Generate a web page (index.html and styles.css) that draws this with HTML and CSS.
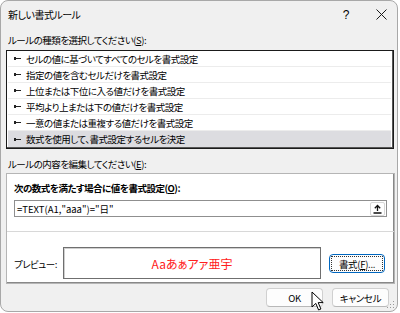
FILE: index.html
```html
<!DOCTYPE html>
<html lang="ja">
<head>
  <meta charset="UTF-8">
  <title>新しい書式ルール</title>
  <link rel="stylesheet" href="styles.css">
</head>
<body>

  <div class="dialog">

    <div class="titlebar">
      <span class="title">新しい書式ルール</span>
      <span class="title-btn help">?</span>
      <span class="title-btn close">
        <svg width="11" height="11" viewBox="0 0 11 11"><path d="M0.5 0.5 L10.5 10.5 M10.5 0.5 L0.5 10.5" stroke="#1a1a1a" stroke-width="1" fill="none"/></svg>
      </span>
    </div>

    <div class="content">
      <div class="label">ルールの種類を選択してください(<u>S</u>):</div>

      <div class="rule-list">
        <div class="rule"><span class="arrow"></span>セルの値に基づいてすべてのセルを書式設定</div>
        <div class="rule"><span class="arrow"></span>指定の値を含むセルだけを書式設定</div>
        <div class="rule"><span class="arrow"></span>上位または下位に入る値だけを書式設定</div>
        <div class="rule"><span class="arrow"></span>平均より上または下の値だけを書式設定</div>
        <div class="rule"><span class="arrow"></span>一意の値または重複する値だけを書式設定</div>
        <div class="rule selected"><span class="arrow"></span>数式を使用して、書式設定するセルを決定</div>
      </div>

      <div class="label second">ルールの内容を編集してください(<u>E</u>):</div>

      <div class="group">
        <div class="formula-part">
          <div class="formula-label">次の数式を満たす場合に値を書式設定(<u>O</u>):</div>
          <div class="formula-input">
            <span class="formula-text">=TEXT(A1,"aaa")="日"</span>
            <span class="ref-btn">
              <svg width="9" height="10" viewBox="0 0 9 10"><path d="M4.5 1.5 L4.5 7 M1.8 4.2 L4.5 1.5 L7.2 4.2 M0.5 9 L8.5 9" stroke="#111" stroke-width="1.3" fill="none"/></svg>
            </span>
          </div>
        </div>

        <div class="preview-part">
          <span class="preview-label">プレビュー:</span>
          <div class="preview-box">Aaあぁアァ亜宇</div>
          <button class="btn format-btn"><span class="focus">書式(<u>F</u>)...</span></button>
        </div>
      </div>

      <div class="footer">
        <button class="btn">OK</button>
        <button class="btn">キャンセル</button>
      </div>
    </div>

    <svg class="cursor" width="14" height="21" viewBox="0 0 14 21">
      <path d="M1 1 L1 16 L4.8 12.4 L7.6 19 L9.9 18 L7.2 11.6 L12.2 11.6 Z" fill="#fff" stroke="#000" stroke-width="1" stroke-linejoin="round"/>
    </svg>

    <svg class="grip" width="8" height="8" viewBox="0 0 8 8">
      <rect x="6" y="0" width="1" height="1" fill="#999"/>
      <rect x="3" y="3" width="1" height="1" fill="#999"/>
      <rect x="6" y="3" width="1" height="1" fill="#999"/>
      <rect x="0" y="6" width="1" height="1" fill="#999"/>
      <rect x="3" y="6" width="1" height="1" fill="#999"/>
      <rect x="6" y="6" width="1" height="1" fill="#999"/>
    </svg>

  </div>

</body>
</html>
```

FILE: styles.css
```css
* {
  margin: 0;
  padding: 0;
  box-sizing: border-box;
}

body {
  background: #fff;
  width: 400px;
  height: 313px;
  overflow: hidden;
  font-family: "Noto Sans CJK JP", sans-serif;
  font-size: 9.5px;
  letter-spacing: -0.5px;
  font-feature-settings: "palt";
  color: #000;
}

.dialog {
  position: relative;
  width: 398px;
  height: 312px;
  background: #f0f0f0;
  border: 1px solid #a8a8a8;
  border-radius: 8px;
}

.titlebar {
  height: 27px;
  display: flex;
  align-items: center;
  padding-left: 7px;
}

.title {
  flex: 1;
  font-size: 10px;
}

.title-btn {
  display: flex;
  justify-content: center;
  font-family: "Liberation Sans", sans-serif;
  font-size: 12px;
  letter-spacing: 0;
}

.help {
  width: 38px;
}

.close {
  width: 32px;
}

.content {
  padding: 4px 4px 0 5px;
}

.label {
  height: 16px;
  line-height: 16px;
  padding-left: 2px;
}

.label.second {
  margin-top: 7px;
}

.rule-list {
  margin-top: 2px;
  width: 388px;
  height: 99px;
  background: #fff;
  border: 1px solid #1a1a1a;
  box-shadow: inset -1px -1px 0 #555;
  padding: 0 2px 0 1px;
}

.rule {
  height: 16px;
  display: flex;
  align-items: center;
  border-bottom: 1px solid #ececec;
  padding-left: 6px;
}

.rule.selected {
  background: #dcdce0;
  border-bottom: none;
}

.arrow {
  width: 7px;
  height: 3px;
  margin-right: 5px;
  position: relative;
  border-left: 2px solid #222;
}

.arrow::after {
  content: "";
  position: absolute;
  left: 0;
  right: 0;
  top: 1px;
  height: 1px;
  background: #222;
}

.group {
  margin-top: 1px;
  width: 389px;
  height: 111px;
  background: #fff;
  border: 1px solid #b5b5b5;
  box-shadow: inset -1px -1px 0 #888;
}

.formula-part {
  height: 58px;
  border-bottom: 1px solid #d8d8d8;
  padding: 5px 0 0 7px;
}

.formula-label {
  font-weight: bold;
  height: 18px;
  line-height: 18px;
}

.formula-input {
  margin-top: 3px;
  width: 373px;
  height: 17px;
  border: 1px solid #8f8f8f;
  display: flex;
  align-items: center;
  justify-content: space-between;
  padding: 0 1px 0 2px;
}

.formula-text {
  letter-spacing: 0;
}

.ref-btn {
  width: 15px;
  height: 14px;
  border: 1px solid #d6d6d6;
  border-radius: 2px;
  display: flex;
  align-items: center;
  justify-content: center;
  background: #fff;
}

.preview-part {
  display: flex;
  align-items: flex-start;
  padding: 15px 0 0 7px;
}

.preview-label {
  width: 49px;
  white-space: nowrap;
  line-height: 16px;
  margin-top: 9px;
}

.preview-box {
  width: 258px;
  height: 32px;
  border: 1px solid #6f6f6f;
  box-shadow: inset 1px 1px 0 #cfcfcf;
  color: #ff2020;
  font-size: 12px;
  letter-spacing: 0;
  display: flex;
  align-items: center;
  justify-content: center;
}

.btn {
  font-family: "Noto Sans CJK JP", sans-serif;
  font-feature-settings: "palt";
  font-size: 9.5px;
  letter-spacing: -0.3px;
  color: #000;
  background: #fdfdfd;
  border: 1px solid #d0d0d0;
  border-bottom-color: #b8b8b8;
  border-radius: 4px;
  width: 57px;
  height: 19px;
  display: flex;
  align-items: center;
  justify-content: center;
}

.format-btn {
  margin-left: 8px;
  margin-top: 7px;
  width: 56px;
  height: 19px;
  border: 1px solid #0067c0;
  padding: 1px;
}

.format-btn .focus {
  width: 100%;
  height: 100%;
  border: 1px dotted #333;
  display: flex;
  align-items: center;
  justify-content: center;
}

.footer {
  display: flex;
  justify-content: flex-end;
  gap: 9px;
  padding: 4px 4px 0 0;
}

.cursor {
  position: absolute;
  left: 310px;
  top: 290px;
}

.grip {
  position: absolute;
  right: 2px;
  bottom: 2px;
}
```
